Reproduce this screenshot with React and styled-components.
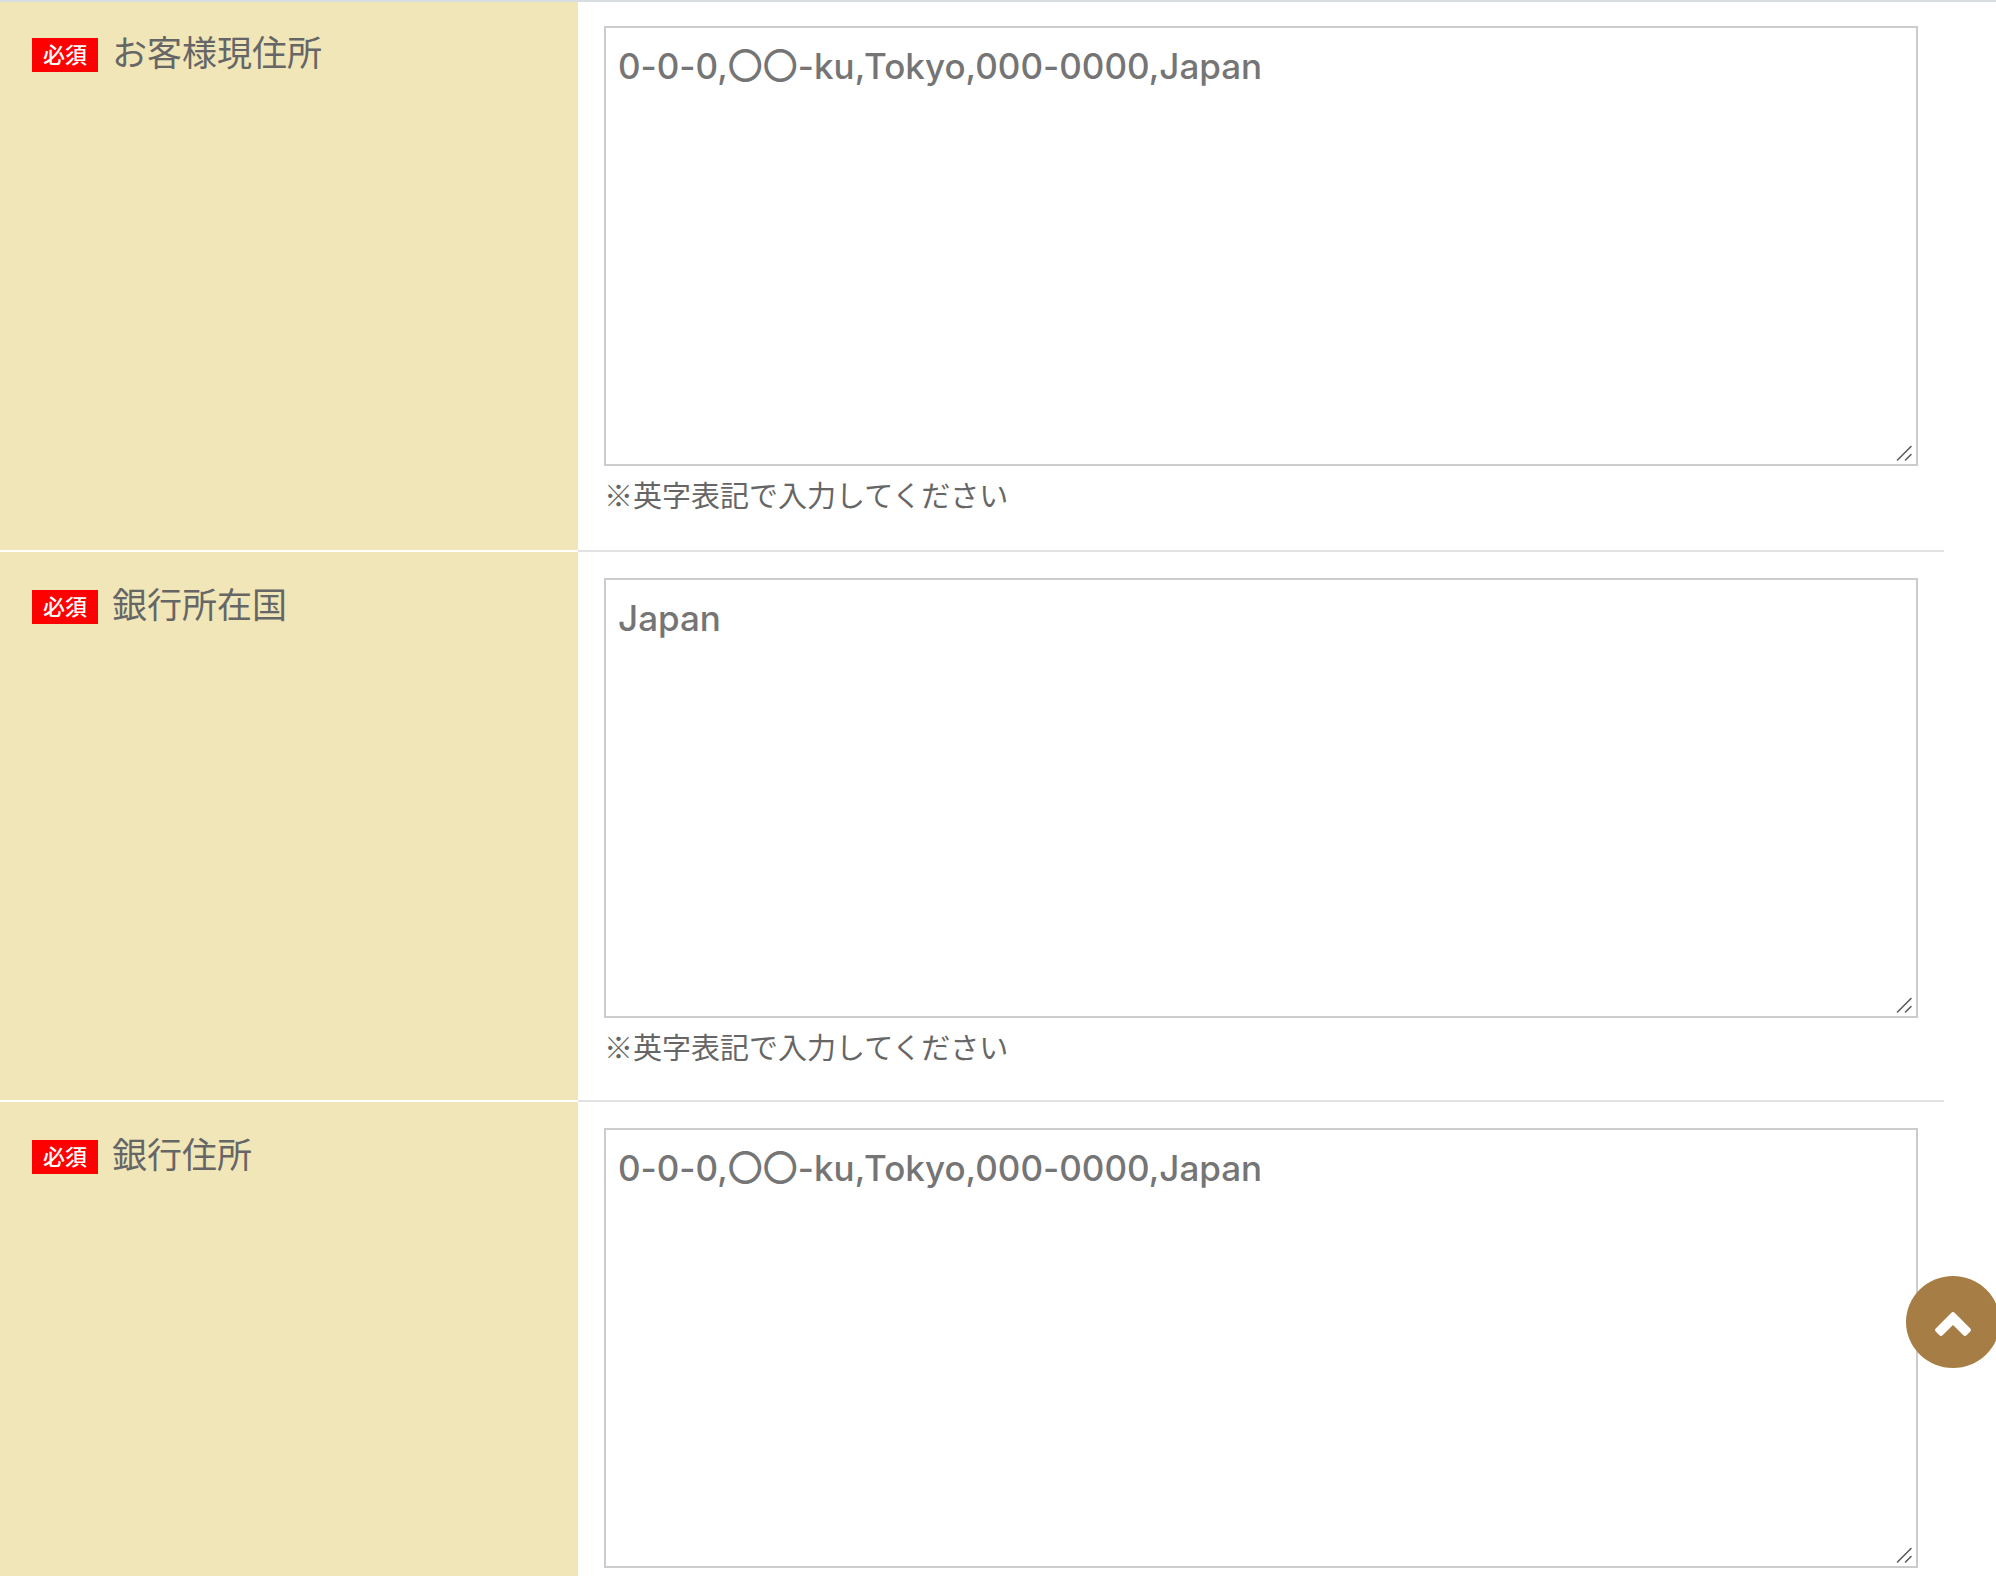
import React from "react";
import styled, { createGlobalStyle } from "styled-components";

const GlobalStyle = createGlobalStyle`
  *, *::before, *::after { box-sizing: border-box; }
  body {
    margin: 0;
    background: #fff;
    color: #666;
    font-family: "Noto Sans CJK JP", sans-serif;
  }
`;

const Page = styled.main`
  min-height: 100vh;
  border-top: 2px solid #d9dde0;
`;

const Form = styled.form`
  margin-right: 52px;
`;

const Row = styled.div`
  --pad-top: 26px;
  display: grid;
  grid-template-columns: 578px 1fr;
  min-height: 550px;

  &:first-child {
    --pad-top: 24px;
  }
  &:last-child {
    min-height: 0;
  }
`;

const LabelCell = styled.div`
  padding: var(--pad-top) 26px 0 32px;
  background: #f1e6b8;
  border-bottom: 2px solid #fff;

  ${Row}:last-child & {
    border-bottom: 0;
  }
`;

const Label = styled.label`
  display: flex;
  align-items: flex-start;
  gap: 14px;
  font-size: 35px;
  line-height: 50px;
`;

const Badge = styled.span`
  margin-top: 12px;
  padding: 0 11px 4px;
  background: #f00;
  color: #fff;
  font-size: 22px;
  font-weight: 500;
  line-height: 30px;
`;

const FieldCell = styled.div`
  padding: var(--pad-top) 26px 8px;
  border-bottom: 2px solid #e2e2e2;

  ${Row}:last-child & {
    border-bottom: 0;
  }
`;

const grip = encodeURIComponent(
  '<svg xmlns="http://www.w3.org/2000/svg" width="16" height="16" fill="none" stroke="#5c5c5c" stroke-width="1.6" stroke-linecap="round"><path d="M1.5 15L15 1.5M9.5 15L15 9.5"/></svg>'
);

const TextArea = styled.textarea`
  display: block;
  width: 100%;
  height: 440px;
  padding: 12px;
  border: 2px solid #ccc;
  border-radius: 0;
  background: #fff url("data:image/svg+xml,${grip}") no-repeat right 4px bottom 3px;
  color: #333;
  font-family: Inter, "Noto Sans CJK JP", sans-serif;
  font-size: 35px;
  font-weight: 500;
  font-feature-settings: "calt" 0;
  line-height: 52px;
  resize: vertical;

  &::placeholder {
    color: #757575;
    opacity: 1;
  }
  &::-webkit-resizer {
    background: transparent;
  }
`;

const Note = styled.p`
  margin: 8px 0 0;
  font-size: 29px;
  line-height: 40px;
`;

const TopButton = styled.button`
  position: fixed;
  right: -4px;
  bottom: 208px;
  display: grid;
  place-items: center;
  width: 94px;
  height: 92px;
  padding: 4px 0 0;
  border: 0;
  border-radius: 50%;
  background: #a67d44;
  color: #fff;
  cursor: pointer;
`;

const fields = [
  {
    id: "address",
    label: "お客様現住所",
    placeholder: "0-0-0,〇〇-ku,Tokyo,000-0000,Japan",
    note: "※英字表記で入力してください",
  },
  {
    id: "bank-country",
    label: "銀行所在国",
    placeholder: "Japan",
    note: "※英字表記で入力してください",
  },
  {
    id: "bank-address",
    label: "銀行住所",
    placeholder: "0-0-0,〇〇-ku,Tokyo,000-0000,Japan",
  },
];

function Field({ id, label, placeholder, note }) {
  return (
    <Row>
      <LabelCell>
        <Label htmlFor={id}>
          <Badge>必須</Badge>
          {label}
        </Label>
      </LabelCell>
      <FieldCell>
        <TextArea id={id} name={id} placeholder={placeholder} required />
        {note && <Note>{note}</Note>}
      </FieldCell>
    </Row>
  );
}

export default function App() {
  return (
    <Page>
      <GlobalStyle />
      <Form>
        {fields.map((field) => (
          <Field key={field.id} {...field} />
        ))}
      </Form>
      <TopButton
        type="button"
        aria-label="ページの先頭へ"
        onClick={() => window.scrollTo({ top: 0, behavior: "smooth" })}
      >
        <svg width="38" height="26" viewBox="0 0 38 26" aria-hidden="true">
          <path
            fill="currentColor"
            d="M17.4 1.7 1.7 17.4a2.3 2.3 0 0 0 0 3.2l3.7 3.7a2.3 2.3 0 0 0 3.2 0L19 13.9l10.4 10.4a2.3 2.3 0 0 0 3.2 0l3.7-3.7a2.3 2.3 0 0 0 0-3.2L20.6 1.7a2.3 2.3 0 0 0-3.2 0Z"
          />
        </svg>
      </TopButton>
    </Page>
  );
}
